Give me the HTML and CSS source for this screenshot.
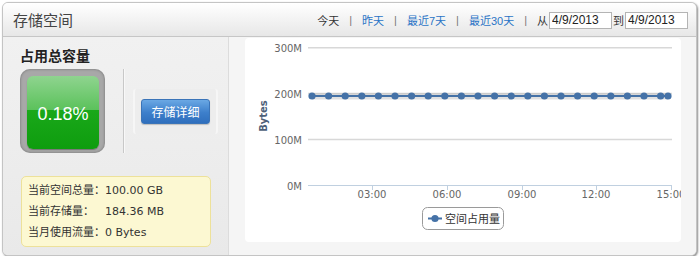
FILE: index.html
```html
<!DOCTYPE html>
<html lang="zh">
<head>
<meta charset="utf-8">
<title>存储空间</title>
<link rel="stylesheet" href="styles.css">
</head>
<body>
<div class="panel">
  <div class="header">
    <h1 class="title">存储空间</h1>
    <div class="nav">
      <span class="nav-item">今天</span><span class="sep">|</span>
      <a class="nav-link">昨天</a><span class="sep">|</span>
      <a class="nav-link">最近7天</a><span class="sep">|</span>
      <a class="nav-link">最近30天</a><span class="sep">|</span>
      <span class="nav-lbl">从</span><input class="date" value="4/9/2013"><span class="nav-lbl">到</span><input class="date" value="4/9/2013">
    </div>
  </div>
  <div class="body">
    <div class="left">
      <div class="left-title">占用总容量</div>
      <div class="left-row">
        <div class="gauge"><div class="gauge-inner">0.18%</div></div>
        <div class="vdivider"></div>
        <div class="btn-wrap"><button class="btn">存储详细</button></div>
      </div>
      <div class="info">
        <div class="info-row"><span class="k">当前空间总量：</span><span class="v">100.00 GB</span></div>
        <div class="info-row"><span class="k">当前存储量：</span><span class="v">184.36 MB</span></div>
        <div class="info-row"><span class="k">当月使用流量：</span><span class="v">0 Bytes</span></div>
      </div>
    </div>
    <div class="right">
      <div class="chart">
        <svg class="chart-svg" width="436" height="204" viewBox="0 0 436 204">
          <g class="grid">
            <line x1="63" y1="9.7" x2="427" y2="9.7"/>
            <line x1="63" y1="55.6" x2="427" y2="55.6"/>
            <line x1="63" y1="101.5" x2="427" y2="101.5"/>
          </g>
          <g class="axis">
            <line x1="63" y1="147.5" x2="427" y2="147.5"/>
            <line x1="127.5" y1="147" x2="127.5" y2="152"/>
            <line x1="202.5" y1="147" x2="202.5" y2="152"/>
            <line x1="277.5" y1="147" x2="277.5" y2="152"/>
            <line x1="351.5" y1="147" x2="351.5" y2="152"/>
            <line x1="426.5" y1="147" x2="426.5" y2="152"/>
          </g>
          <g class="ylabels">
            <text x="57" y="13.5">300M</text>
            <text x="57" y="59.5">200M</text>
            <text x="57" y="105.5">100M</text>
            <text x="57" y="151.5">0M</text>
          </g>
          <text class="ytitle" x="0" y="0" transform="translate(22 78) rotate(-90)">Bytes</text>
          <g class="xlabels">
            <text x="127" y="160">03:00</text>
            <text x="202" y="160">06:00</text>
            <text x="277" y="160">09:00</text>
            <text x="351" y="160">12:00</text>
            <text x="426" y="160">15:00</text>
          </g>
          <line class="series-shadow" x1="67" y1="58.5" x2="423" y2="58.5"/>
          <line class="series" x1="67" y1="58" x2="423" y2="58"/>
          <g class="points">
            <circle cx="67" cy="58" r="3.6"/><circle cx="83.6" cy="58" r="3.6"/><circle cx="100.2" cy="58" r="3.6"/>
            <circle cx="116.8" cy="58" r="3.6"/><circle cx="133.4" cy="58" r="3.6"/><circle cx="150" cy="58" r="3.6"/>
            <circle cx="166.6" cy="58" r="3.6"/><circle cx="183.2" cy="58" r="3.6"/><circle cx="199.8" cy="58" r="3.6"/>
            <circle cx="216.4" cy="58" r="3.6"/><circle cx="233" cy="58" r="3.6"/><circle cx="249.6" cy="58" r="3.6"/>
            <circle cx="266.2" cy="58" r="3.6"/><circle cx="282.8" cy="58" r="3.6"/><circle cx="299.4" cy="58" r="3.6"/>
            <circle cx="316" cy="58" r="3.6"/><circle cx="332.6" cy="58" r="3.6"/><circle cx="349.2" cy="58" r="3.6"/>
            <circle cx="365.8" cy="58" r="3.6"/><circle cx="382.4" cy="58" r="3.6"/><circle cx="399" cy="58" r="3.6"/>
            <circle cx="415.6" cy="58" r="3.6"/><circle cx="423" cy="58" r="3.6"/>
          </g>
          <g class="legend">
            <rect class="legend-box" x="177.5" y="169.5" width="81" height="22" rx="5"/>
            <line class="series" x1="183" y1="180.5" x2="197" y2="180.5"/>
            <circle class="legend-dot" cx="190" cy="180.5" r="3.6"/>
            <text class="legend-text" x="200" y="184.5">空间占用量</text>
          </g>
        </svg>
      </div>
    </div>
  </div>
</div>
</body>
</html>
```
FILE: styles.css
```css
* { box-sizing: border-box; }
html, body { margin: 0; padding: 0; background: #ffffff; }
body {
  font-family: "Liberation Sans", "Noto Sans CJK SC", sans-serif;
  font-size: 12px;
  color: #333;
}
.panel {
  margin: 2px 0 0 2px;
  width: 695px;
  height: 254px;
  border: 1px solid #c4c4c4;
  border-radius: 6px;
  box-shadow: 1px 1px 2px rgba(0,0,0,0.45);
  overflow: hidden;
  display: flex;
  flex-direction: column;
  background: #f5f5f5;
}
.header {
  height: 34px;
  flex: none;
  display: flex;
  align-items: center;
  justify-content: space-between;
  padding: 0 7px 0 10px;
  background: linear-gradient(#ffffff, #e7e7e7);
  border-bottom: 1px solid #c6c6c6;
}
.title {
  margin: 0;
  font-size: 15px;
  font-weight: normal;
  color: #444;
}
.nav {
  display: flex;
  align-items: center;
  font-size: 11px;
  padding-top: 1px;
  white-space: nowrap;
}
.nav-item { color: #333; }
.nav-link { color: #2a74c6; text-decoration: none; cursor: pointer; }
.sep { color: #777; margin: 0 10px; font-size: 11px; }
.sep:last-of-type { margin-right: 6px; }
.nav-lbl { color: #333; }
.date {
  width: 63px;
  height: 17px;
  margin: 0 1px;
  padding: 0 2px;
  border: 1px solid #b4b4b4;
  background: #fff;
  font-family: "Liberation Sans", sans-serif;
  font-size: 12px;
  color: #222;
}
.body {
  flex: 1;
  display: flex;
  min-height: 0;
}
.left {
  width: 226px;
  flex: none;
  background: linear-gradient(#f1f1f1, #e9e9e9);
  border-right: 1px solid #dcdcdc;
  padding: 10px 0 0 17px;
}
.left-title {
  font-size: 14px;
  font-weight: bold;
  line-height: 18px;
  color: #222;
}
.left-row {
  margin-top: 4px;
  display: flex;
  align-items: center;
  height: 84px;
}
.gauge {
  width: 85px;
  height: 84px;
  border-radius: 10px;
  background: #a8a8a8;
  box-shadow: inset 0 0 3px rgba(0,0,0,0.35);
  padding: 7px 6px 4px 7px;
}
.gauge-inner {
  width: 100%;
  height: 100%;
  border-radius: 6px;
  background: linear-gradient(#8fd48f 0%, #5cc25c 46%, #1aa81a 47%, #0e9d0e 100%);
  color: #fff;
  font-size: 18px;
  display: flex;
  align-items: center;
  justify-content: center;
  padding-top: 3px;
  box-shadow: 0 1px 1px rgba(0,0,0,0.3);
}
.vdivider {
  width: 1px;
  height: 84px;
  margin-left: 18px;
  background: #c8c8c8;
  box-shadow: 1px 0 0 #f8f8f8;
}
.btn-wrap {
  margin-left: 9px;
  width: 85px;
  height: 45px;
  display: flex;
  align-items: center;
  justify-content: center;
  background: #ededed;
  border-left: 2px solid #f6f6f6;
  border-right: 2px solid #f6f6f6;
  border-radius: 3px;
}
.btn {
  width: 69px;
  height: 25px;
  border: 1px solid #3a74b8;
  border-radius: 3px;
  background: linear-gradient(#6aa8e4, #3d7fcb 55%, #2f6fbd);
  color: #fff;
  font-family: "Liberation Sans", "Noto Sans CJK SC", sans-serif;
  font-size: 12px;
  padding: 0;
  box-shadow: 0 1px 1px rgba(0,0,0,0.2);
}
.info {
  margin-top: 23px;
  margin-left: 1px;
  width: 190px;
  height: 71px;
  background: #fcf8d2;
  border: 1px solid #ede19a;
  border-radius: 5px;
  padding: 3px 6px 2px 6px;
}
.info-row {
  display: flex;
  line-height: 21px;
  font-size: 11px;
  color: #333;
  white-space: nowrap;
}
.info-row .k { width: 77px; flex: none; }
.info-row .v { font-family: "DejaVu Sans", "Liberation Sans", sans-serif; font-size: 11px; color: #333; }
.right {
  flex: 1;
  background: #f5f5f5;
  padding: 1px 15px 14px 16px;
}
.chart {
  width: 436px;
  height: 204px;
  background: #ffffff;
  border-radius: 4px;
  overflow: hidden;
}
.chart-svg { display: block; }
.grid line { stroke: #d8d8d8; stroke-width: 1.5; }
.axis line { stroke: #c0d0e0; stroke-width: 1; }
.ylabels text {
  font-family: "DejaVu Sans", sans-serif;
  font-size: 10px;
  fill: #666;
  text-anchor: end;
}
.ytitle {
  font-family: "DejaVu Sans", sans-serif;
  font-size: 10px;
  font-weight: bold;
  fill: #4d6078;
  text-anchor: middle;
}
.xlabels text {
  font-family: "DejaVu Sans", sans-serif;
  font-size: 10px;
  fill: #666;
  text-anchor: middle;
}
.series-shadow { stroke: rgba(0,0,0,0.12); stroke-width: 6; }
.series { stroke: #4572a7; stroke-width: 2; }
.points circle, .legend-dot { fill: #4572a7; }
.legend-box { fill: #fff; stroke: #9a9a9a; stroke-width: 1; }
.legend-text {
  font-family: "Noto Sans CJK SC", sans-serif;
  font-size: 11px;
  fill: #333;
}
```
